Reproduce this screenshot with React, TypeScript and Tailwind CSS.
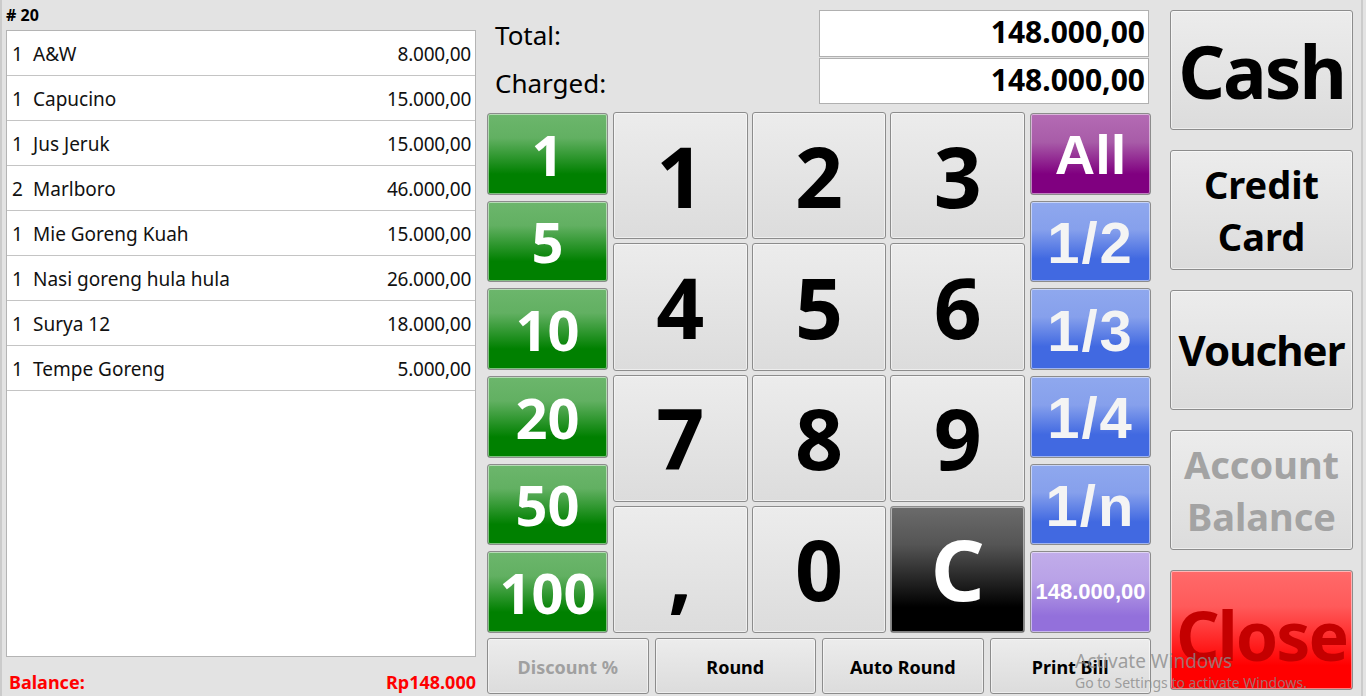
import React from 'react';

const items = [
  { qty: 1, name: 'A&W', price: '8.000,00' },
  { qty: 1, name: 'Capucino', price: '15.000,00' },
  { qty: 1, name: 'Jus Jeruk', price: '15.000,00' },
  { qty: 2, name: 'Marlboro', price: '46.000,00' },
  { qty: 1, name: 'Mie Goreng Kuah', price: '15.000,00' },
  { qty: 1, name: 'Nasi goreng hula hula', price: '26.000,00' },
  { qty: 1, name: 'Surya 12', price: '18.000,00' },
  { qty: 1, name: 'Tempe Goreng', price: '5.000,00' },
];

const gray = 'bg-[linear-gradient(to_bottom,#ececec,#dcdcdc)] text-black';
const green = 'bg-[linear-gradient(to_bottom,#6cb66c_0%,#62b062_30%,#008000_75%,#008000_100%)] text-white';
const blue = 'bg-[linear-gradient(to_bottom,#8fa8ee_0%,#86a0ec_35%,#4169e1_72%,#4169e1_100%)] text-[#f4f4f4]';

interface BtnProps {
  className?: string;
  children?: React.ReactNode;
}

const Btn: React.FC<BtnProps> = ({ className = '', children }) => (
  <div
    className={`flex items-center justify-center rounded-[3px] border border-[#8c8c8c] shadow-[inset_0_0_0_1px_rgba(255,255,255,0.5)] font-bold select-none ${className}`}
  >
    {children}
  </div>
);

const App: React.FC = () => {
  const sans = "font-['Noto_Sans','Open_Sans',sans-serif]";
  const arial = "font-['Liberation_Sans',Arial,sans-serif]";

  return (
    <div className={`relative w-[1366px] h-[696px] overflow-hidden bg-[#e3e3e3] border-l-2 border-[#cbcbcb] flex ${sans}`}>
      {/* order list */}
      <div className="w-[478px] flex flex-col pl-[4px]">
        <div className="h-[30px] pt-[6px] text-[16px] font-bold leading-[18px] text-black"># 20</div>
        <div className="w-[470px] h-[630px] bg-white border border-[#b4b4b4]">
          {items.map((it, i) => (
            <div key={i} className="flex items-center h-[45px] pt-[3px] border-b border-[#c4c4c4] text-[19px] leading-[26px] text-[#111]">
              <span className="w-[26px] pl-[5px]">{it.qty}</span>
              <span className="flex-1">{it.name}</span>
              <span className="pr-[4px] tracking-[-0.25px]">{it.price}</span>
            </div>
          ))}
        </div>
        <div className="flex-1 flex items-center justify-between pl-[3px] pr-[4px] pt-[12px] text-[18px] font-bold text-[#ff0000]">
          <span>Balance:</span>
          <span>Rp148.000</span>
        </div>
      </div>

      {/* payment pad */}
      <div className="ml-[7px] w-[664px] flex flex-col pt-[10px]">
        <div className="flex flex-col gap-[1px] pr-[2px]">
          <div className="flex items-center h-[47px]">
            <span className="flex-1 pl-[8px] pt-[4px] text-[26px] text-black">Total:</span>
            <div className="w-[330px] h-full bg-white border border-[#b0b0b0] flex items-center justify-end pr-[3px] pb-[4px] text-[30px] font-bold text-black">148.000,00</div>
          </div>
          <div className="flex items-center h-[46px]">
            <span className="flex-1 pl-[8px] pt-[4px] text-[26px] text-black">Charged:</span>
            <div className="w-[330px] h-full bg-white border border-[#b0b0b0] flex items-center justify-end pr-[3px] pb-[4px] text-[30px] font-bold text-black">148.000,00</div>
          </div>
        </div>

        <div className="mt-[8px] flex gap-[5px] h-[521px]">
          <div className="w-[121px] grid grid-rows-6 gap-[6px] pt-[1px]">
            {['1', '5', '10', '20', '50', '100'].map((v) => (
              <Btn key={v} className={`${green} text-[56px] leading-none`}>{v}</Btn>
            ))}
          </div>
          <div className="flex-1 grid grid-cols-3 grid-rows-4 gap-[4px]">
            {['1', '2', '3', '4', '5', '6', '7', '8', '9'].map((v) => (
              <Btn key={v} className={`${gray} text-[84px] leading-none`}>{v}</Btn>
            ))}
            <Btn className={`${gray} text-[84px] leading-none items-end pb-[18px]`}>,</Btn>
            <Btn className={`${gray} text-[84px] leading-none`}>0</Btn>
            <Btn className="bg-[linear-gradient(to_bottom,#6b6b6b_0%,#555_30%,#000_80%,#000_100%)] text-white text-[84px] leading-none">C</Btn>
          </div>
          <div className={`w-[121px] grid grid-rows-6 gap-[6px] pt-[1px] ${arial}`}>
            <Btn className="bg-[linear-gradient(to_bottom,#b46bb4_0%,#a85ca8_35%,#800080_75%,#800080_100%)] text-white text-[56px] leading-none pt-[3px]">All</Btn>
            <Btn className={`${blue} text-[58px] tracking-[2px] leading-none pt-[3px]`}>1/2</Btn>
            <Btn className={`${blue} text-[58px] tracking-[2px] leading-none pt-[3px]`}>1/3</Btn>
            <Btn className={`${blue} text-[58px] tracking-[2px] leading-none pt-[3px]`}>1/4</Btn>
            <Btn className={`${blue} text-[58px] tracking-[2px] leading-none pt-[3px]`}>1/n</Btn>
            <Btn className="bg-[linear-gradient(to_bottom,#c1adea_0%,#b9a2e7_35%,#9370db_80%,#9370db_100%)] text-white text-[22px] leading-none">148.000,00</Btn>
          </div>
        </div>

        <div className="mt-[5px] grid grid-cols-4 gap-[6px] h-[56px]">
          <Btn className="bg-[linear-gradient(to_bottom,#ececec,#dcdcdc)] text-[#a0a0a0] text-[18px] leading-none pt-[2px]">Discount %</Btn>
          <Btn className={`${gray} text-[18px] leading-none pt-[2px]`}>Round</Btn>
          <Btn className={`${gray} text-[18px] leading-none pt-[2px]`}>Auto Round</Btn>
          <Btn className={`${gray} text-[18px] leading-none pt-[2px]`}>Print Bill</Btn>
        </div>
      </div>

      {/* payment types */}
      <div className="ml-[19px] w-[183px] flex flex-col gap-[20px] pt-[10px]">
        <Btn className={`${gray} h-[120px] text-[73px] leading-none tracking-[-2px]`}>Cash</Btn>
        <Btn className={`${gray} h-[120px] text-[38px] leading-[52px] flex-col`}>
          <span>Credit</span>
          <span>Card</span>
        </Btn>
        <Btn className={`${gray} h-[120px] text-[42px] leading-none tracking-[-1px]`}>Voucher</Btn>
        <Btn className="bg-[linear-gradient(to_bottom,#ececec,#dcdcdc)] text-[#a3a3a3] h-[120px] text-[38px] leading-[52px] flex-col">
          <span>Account</span>
          <span>Balance</span>
        </Btn>
        <Btn className="h-[120px] bg-[linear-gradient(to_bottom,#ff6a6a_0%,#ff5a5a_30%,#ff0000_80%,#ff0000_100%)] text-[#c40000] text-[68px] leading-none tracking-[-2px] pt-[10px]">Close</Btn>
      </div>

      <div className="ml-[8px] w-[2px] h-full bg-[#cbcbcb]" />

      {/* OS watermark */}
      <div className="absolute left-[1073px] top-[652px] pointer-events-none text-[#8a8a8a]/80 leading-none">
        <div className="text-[19px]">Activate Windows</div>
        <div className="text-[14px] mt-[5px]">Go to Settings to activate Windows.</div>
      </div>
    </div>
  );
};

export default App;
